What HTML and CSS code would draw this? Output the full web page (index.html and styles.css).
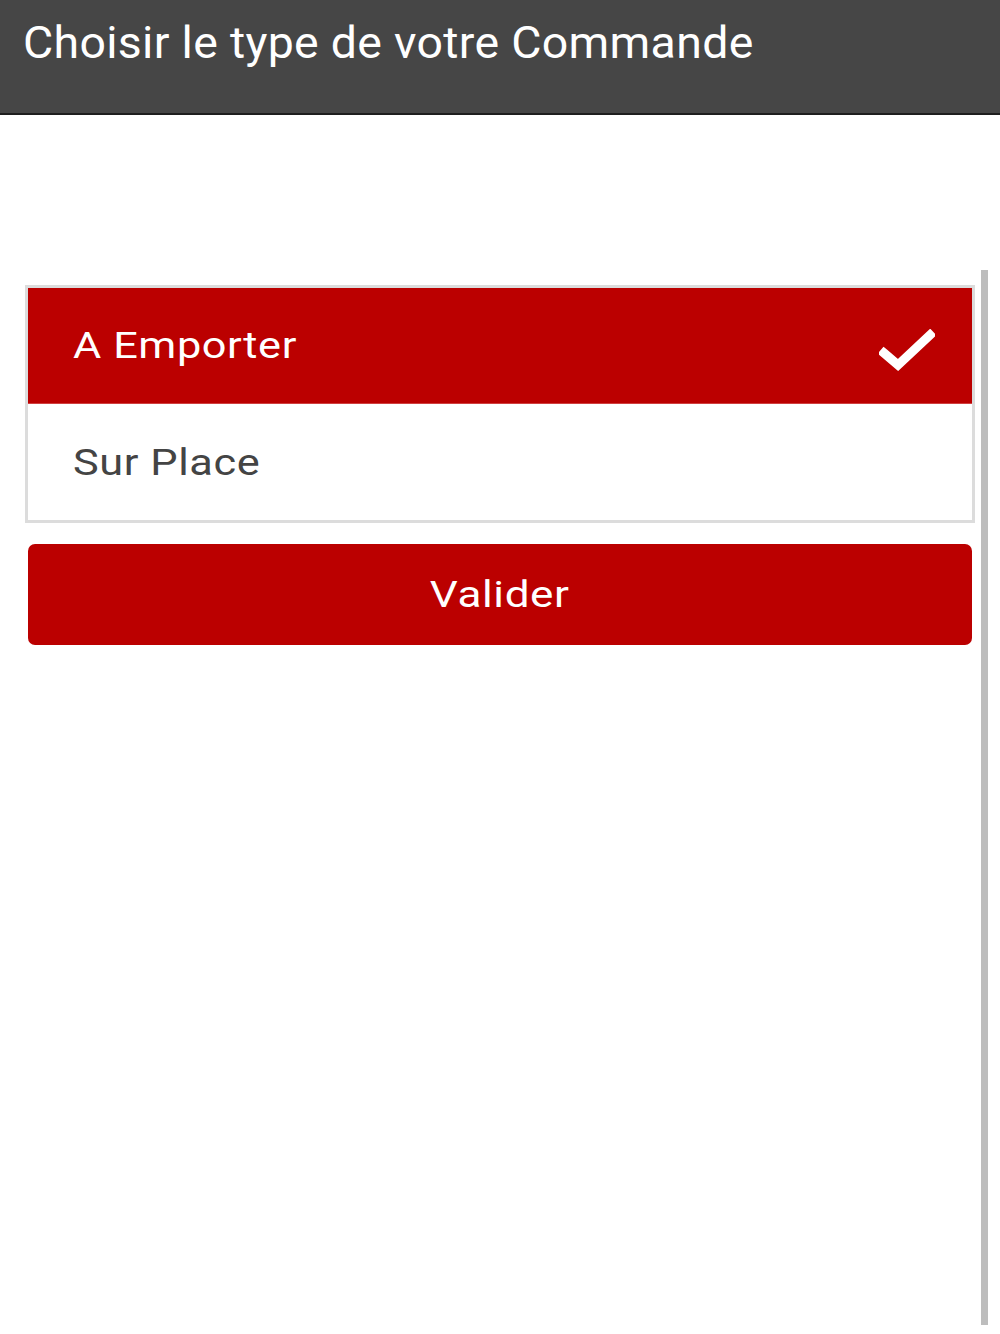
FILE: index.html
```html
<!DOCTYPE html>
<html>
	<head>
		<meta charset="utf-8">
		<link rel="stylesheet" href="styles.css">
	</head>
	<body>
		<div id="header"><span class="wide">Choisir le type de votre Commande</span></div>
		<div id="content">
			<div id="list">
				<div class="item selected">
					<span class="wide">A Emporter</span>
					<svg class="check" width="56" height="42" viewBox="0 0 56 42">
						<path d="M5 24 L19 36 L51 6" fill="none" stroke="#fff" stroke-width="9" stroke-linejoin="miter" stroke-linecap="square"/>
					</svg>
				</div>
				<div class="item">
					<span class="wide">Sur Place</span>
				</div>
			</div>
			<button id="valider"><span class="wide">Valider</span></button>
			<div id="scrollbar"></div>
		</div>
	</body>
</html>
```

FILE: styles.css
```css
*{
	margin: 0;
	padding: 0;
	box-sizing: border-box;
}
body{
	background-color: #fff;
	font-family: Roboto, "Liberation Sans", sans-serif;
	width: 1000px;
	height: 1334px;
	overflow: hidden;
}
.wide{
	display: inline-block;
	transform-origin: left center;
	transform: scaleX(1.17);
}
#header{
	height: 115px;
	background-color: #464646;
	border-bottom: 2px solid #1e1e1e;
	color: #fff;
	font-size: 44px;
	padding: 17px 0 0 23px;
	letter-spacing: 0.3px;
}
#header .wide{
	transform: scaleX(1.055);
}
#content{
	position: relative;
	padding: 170px 25px 0 25px;
	height: 1219px;
}
#list{
	width: 950px;
	border: 3px solid #dcdcdc;
}
.item{
	display: flex;
	justify-content: space-between;
	align-items: center;
	height: 116px;
	padding: 0 37px 0 45px;
	font-size: 37px;
	letter-spacing: 0.5px;
	color: #444;
	background-color: #fff;
}
.item.selected{
	background-color: #bb0000;
	color: #fff;
	border-bottom: 1px solid #d04040;
}
.check{
	display: block;
	margin-top: 8px;
}
#valider{
	display: block;
	width: 944px;
	height: 101px;
	margin: 21px 0 0 3px;
	background-color: #bb0000;
	border: none;
	border-radius: 7px;
	color: #fff;
	font-family: Roboto, "Liberation Sans", sans-serif;
	font-size: 37px;
	letter-spacing: 0.5px;
}
#valider .wide{
	transform-origin: center center;
	transform: scaleX(1.19);
}
#scrollbar{
	position: absolute;
	left: 981px;
	top: 155px;
	width: 7px;
	height: 1055px;
	background-color: #bdbdbd;
}
```
